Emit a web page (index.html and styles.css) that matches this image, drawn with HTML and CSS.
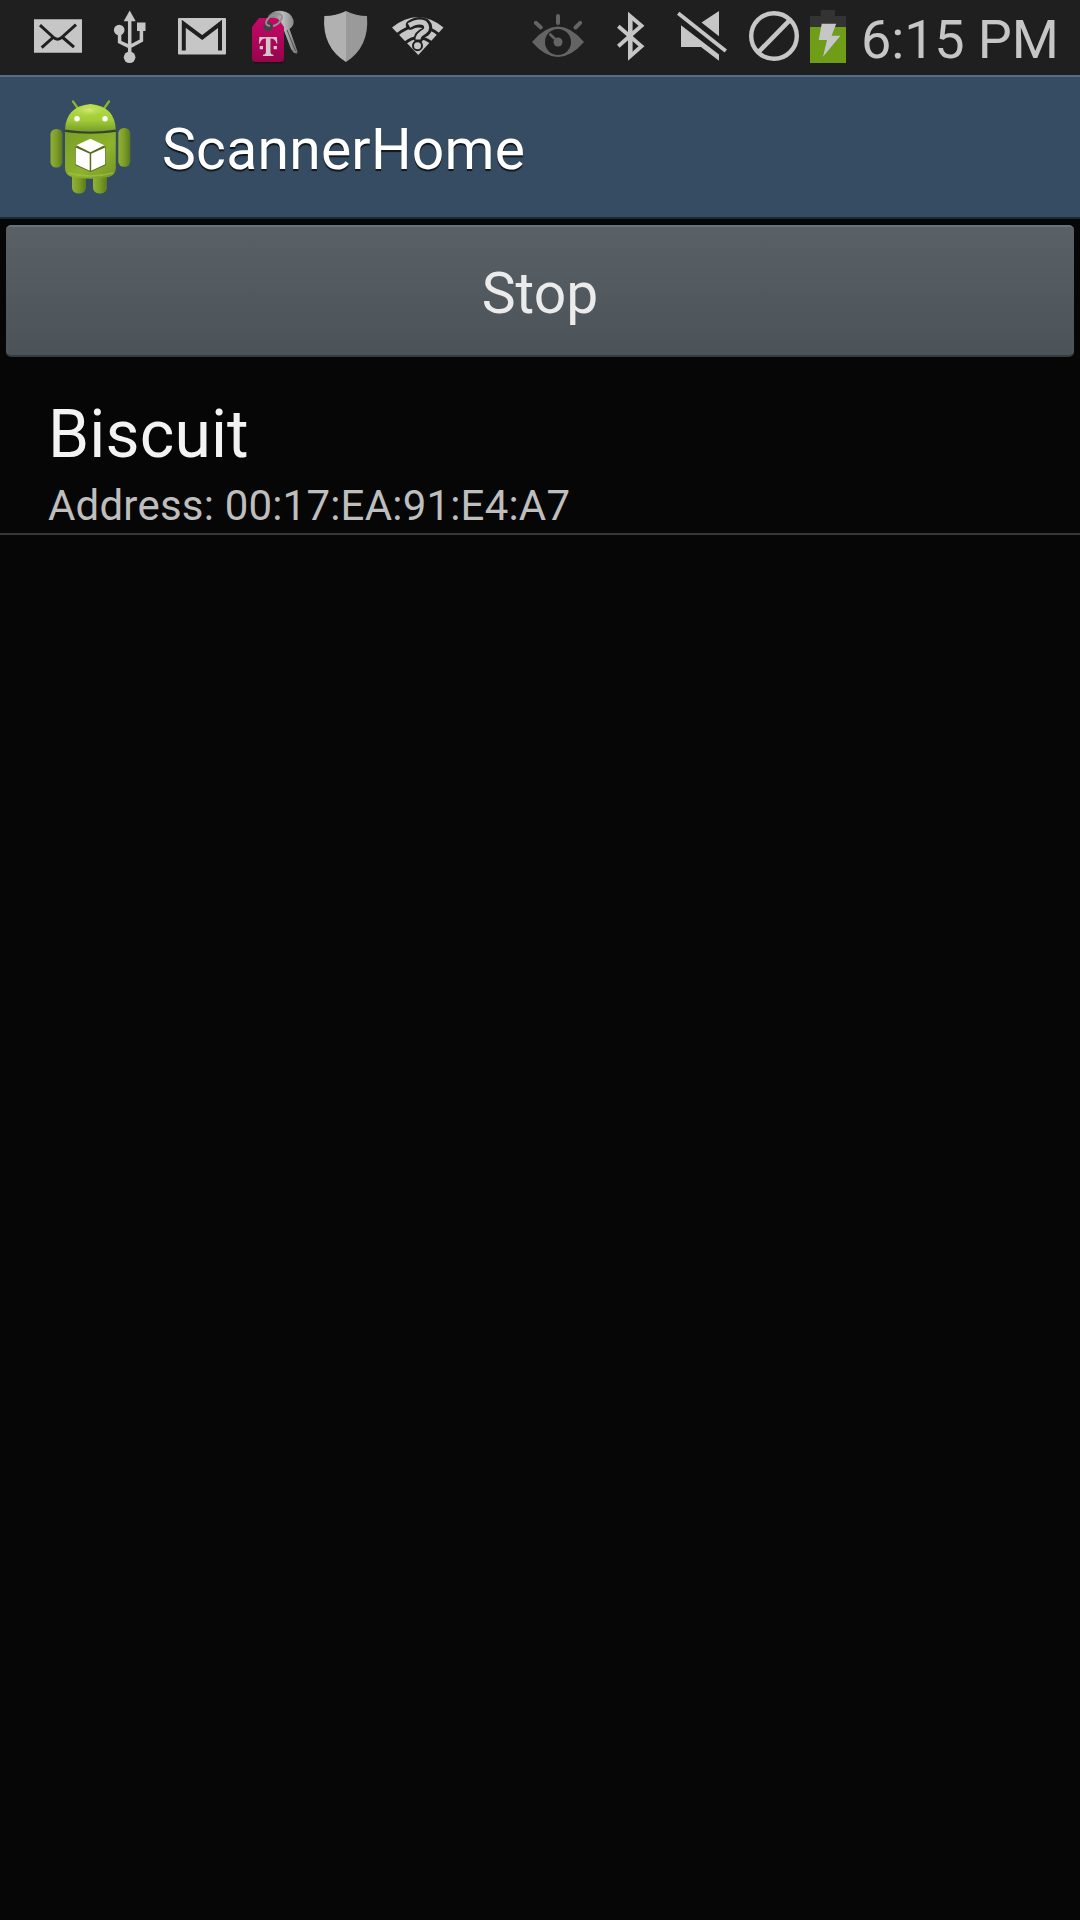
FILE: index.html
```html
<!DOCTYPE html>
<html lang="en">
<head>
<meta charset="utf-8">
<title>ScannerHome</title>
<link rel="stylesheet" href="styles.css">
</head>
<body>
<div class="status-bar">
  <div class="notifications">
    <svg class="slot" viewBox="22 0 72 75"><path class="light" d="M34 19.300h48v33.400H34z"/><path class="cut" stroke-width="3" d="M40 25.200L53 37q4.600 4.500 9.200 0L76 24.700M41.700 47.700L53 37.500M74 47.200L62.200 37"/></svg>
    <svg class="slot" viewBox="94 0 72 75"><path class="light" d="M129.700 10.500l6 10.700h-12zM137 22.500h8.500V31H137z"/><circle class="light" cx="119.200" cy="30" r="5.300"/><circle class="light" cx="129.600" cy="57.300" r="5.800"/><path class="line" stroke-width="3.500" d="M129.700 20v34M119.600 32v10l10 4.700 11.800-6.200V28"/></svg>
    <svg class="slot" viewBox="166 0 72 75"><rect class="light" x="178" y="18" width="48" height="36.500" rx="1"/><path class="cut" stroke-width="4" d="M183.800 50.500V23.800L202.200 37.500 220 23.800v26.700"/></svg>
    <svg class="slot" viewBox="238 0 72 75">
      <defs><linearGradient id="pink" x1="0" y1="0" x2="0" y2="1"><stop offset="0" stop-color="#c60868"/><stop offset="1" stop-color="#96044c"/></linearGradient><linearGradient id="steel"><stop offset="0" stop-color="#666"/><stop offset=".5" stop-color="#bdbdbd"/><stop offset="1" stop-color="#777"/></linearGradient></defs>
      <path fill="url(#steel)" d="M268 16q5-6 14-5 9 1 11.500 9 1 6-4 9l8 22.500-.5 2-3-.5-3-4-8-21-8-5z"/>
      <path stroke="#555" stroke-width="1" d="M287 30l8.500 21"/>
      <path fill="#161616" d="M254 62h29v1.500h-29z"/>
      <path fill="url(#pink)" d="M259 18h16q3 0 5 3l4 6v31q0 4-4 4h-24q-4 0-4-4V27z"/>
      <circle cx="268" cy="26.500" r="4.700" fill="#454045"/>
      <path fill="none" stroke="#929292" stroke-width="2" d="M270 26q-6-1-3-6 4-6 12-6 5 1 2 6-3 5-8 6"/>
      <path fill="#d2c6ca" d="M259.300 37h17.600l.5 6.500h-1q-1-5-5.900-5v13.500q0 2.500 3 2.800V56h-10.600v-1.200q3-.3 3-2.800V38.500q-5 0-6 5h-1zM259.700 46h3.300v3.300h-3.300zM273.600 46h3.300v3.300h-3.300z"/>
    </svg>
    <svg class="slot" viewBox="310 0 72 75"><path fill="#b1b1b1" d="M346 11q-10 5-21.700 5-2.500 31 21.700 46z"/><path fill="#9a9a9a" d="M346 11q10 5 21 5 2.500 31-21 46z"/></svg>
    <svg class="slot" viewBox="382 0 72 75">
      <path class="light" d="M392 27.500q26-21 51.500 0L418.300 55z"/>
      <path class="cut" stroke-width="3" d="M396 35.500q22-19 44 0M404 44q14-13 29 0"/>
      <path class="cut" stroke-width="9.500" stroke-linecap="round" stroke-linejoin="round" d="M410.500 25q8-5 14.500-2 5 4.500 0 9-6.500 3-6.500 6.500"/>
      <path class="line" stroke-width="5" d="M409 25.500q9-5.500 15.500-2.500 4.500 4.500 0 8.500-6.500 3.500-6.500 8"/>
      <circle cx="417.500" cy="45.700" r="4.500" fill="#c6c6c6" stroke="#1f1f1f" stroke-width="2"/>
    </svg>
  </div>
  <div class="system">
    <svg class="slot" viewBox="522 0 72 75"><path fill="#646464" d="M532 42q26-31 52 0-26 30-52 0z"/><circle cx="558" cy="42" r="13" fill="#1f1f1f"/><circle cx="558" cy="42" r="4.500" fill="#646464"/><path fill="none" stroke="#646464" stroke-width="2.600" d="M549.500 33.800l5.500 5.200"/><path fill="none" stroke="#646464" stroke-width="4" stroke-linecap="round" d="M558 16v7M535.800 22.800l5 4.700M580.200 22.800l-4.700 4.700"/></svg>
    <svg class="slot" viewBox="594 0 72 75"><path class="line" stroke-width="3.900" d="M618.300 26.300L641.500 46.200 630 56.500V16l11.500 9.800-23.200 20.500"/><path class="light" d="M628 12.500l4.600 4v39.200l-4.600 4z"/></svg>
    <svg class="slot" viewBox="666 0 72 75"><path class="line" stroke-width="3.800" d="M678.200 13.300L725.800 51"/><path class="light" d="M701.500 22.500L719 11v25.200zM681 25.200l38 29.300v6.300L701 47h-20z"/></svg>
    <svg class="slot" viewBox="738 0 72 75"><circle class="line" cx="774" cy="36" r="22.800" stroke-width="4.400"/><path class="line" stroke-width="4.600" d="M758.500 52L790 19.800"/></svg>
    <svg class="battery" viewBox="810 0 36 75"><path fill="#333" d="M810 16h10.700v-6H835v6h11v11h-36z"/><path fill="#6f9d18" d="M810 27h36v36h-36z"/><path class="light" d="M821.700 23.700h14.500l-4.600 12h8.800l-17.400 21L827 40h-8.300z"/></svg>
    <span class="clock">6:15 PM</span>
  </div>
</div>
<header class="action-bar">
  <svg class="app-icon" viewBox="46 96 90 102">
    <defs>
      <linearGradient id="head" x1="0" y1="0" x2="0" y2="1"><stop offset="0" stop-color="#b8e04b"/><stop offset=".6" stop-color="#a1ca38"/><stop offset="1" stop-color="#779d27"/></linearGradient>
      <linearGradient id="body" x1="0" y1="0" x2="1" y2="1"><stop offset="0" stop-color="#7b9e29"/><stop offset=".6" stop-color="#8db22c"/><stop offset="1" stop-color="#749426"/></linearGradient>
      <linearGradient id="limb"><stop offset="0" stop-color="#8fb232"/><stop offset=".5" stop-color="#7c9d29"/><stop offset="1" stop-color="#5c791d"/></linearGradient>
      <radialGradient id="shine"><stop offset="0" stop-color="#d9e67e"/><stop offset="1" stop-color="#b8e04b" stop-opacity="0"/></radialGradient>
    </defs>
    <path stroke="#8ab52f" stroke-width="2.200" stroke-linecap="round" d="M73 101.500l5 7M109 101.500l-5 7"/>
    <rect fill="url(#limb)" x="72" y="170" width="14" height="23.500" rx="6"/><rect fill="url(#limb)" x="93" y="170" width="14" height="23.500" rx="6"/>
    <rect fill="url(#limb)" x="50.500" y="129" width="12" height="38.500" rx="5.500"/><rect fill="url(#limb)" x="118.300" y="128" width="12" height="38.800" rx="5.500"/>
    <path fill="url(#body)" d="M65 132q25 2 50.800 0v36q0 7-7 9-18 3.500-36.800 0-7-2-7-9z"/>
    <path fill="none" stroke="#a4c64f" stroke-opacity=".6" stroke-width="1.500" d="M68 173q22 6 45 0"/>
    <path fill="url(#head)" d="M65 129.500q1-23 25.500-25.500 24.500 2.500 25.300 25.500-25 4-50.800 0z"/>
    <ellipse fill="url(#shine)" cx="89" cy="110" rx="14" ry="6"/>
    <path fill="none" stroke="#344713" stroke-width="1.500" d="M65 131q25 4 50.800 0"/>
    <circle cx="77" cy="118.700" r="2.700" fill="#fff"/><circle cx="105" cy="118.700" r="2.700" fill="#fff"/>
    <path fill="#536d1b" d="M75 147l15.500-7 15.500 7v18l-15.500 7-15.500-7z"/>
    <path fill="#fff" d="M90.400 138.700l14 6.600-14 7-14-7zM75.700 147.500l14 6.300v16.900l-14-6.500zM105.200 147.500l-14 6.300v16.900l14-6.500z"/>
  </svg>
  <h1 class="title">ScannerHome</h1>
</header>
<main class="content">
  <button class="stop" type="button">Stop</button>
  <ul class="devices">
    <li class="device"><span class="name">Biscuit</span><span class="address">Address: 00:17:EA:91:E4:A7</span></li>
  </ul>
</main>
</body>
</html>
```
FILE: styles.css
```css
* { box-sizing: border-box; }
body {
  margin: 0;
  min-height: 1920px;
  background: #060606;
  font-family: Roboto, "Liberation Sans", sans-serif;
}
.status-bar {
  display: flex;
  justify-content: space-between;
  height: 75px;
  padding: 0 23px 0 22px;
  background: #1f1f1f;
}
.notifications, .system { display: flex; }
.slot { width: 72px; height: 75px; }
.battery { width: 36px; height: 75px; }
.light { fill: #c6c6c6; }
.line { fill: none; stroke: #c6c6c6; }
.cut { fill: none; stroke: #1f1f1f; }
.clock {
  width: 211px;
  padding-left: 15px;
  color: #c6c6c6;
  font-size: 54px;
  line-height: 79px;
  letter-spacing: -0.15px;
  white-space: nowrap;
}
.action-bar {
  display: flex;
  align-items: center;
  gap: 26px;
  height: 144px;
  padding-left: 46px;
  background: #354c62;
  border-top: 2px solid #527087;
  border-bottom: 2px solid #172b3b;
}
.app-icon { width: 90px; height: 102px; }
.title {
  margin: 0;
  padding-top: 6px;
  color: #fff;
  font-size: 57px;
  font-weight: 400;
  line-height: 72px;
  letter-spacing: 0.25px;
  text-shadow: 0 2px 1px #10161c;
}
.content { padding-top: 6px; }
.stop {
  display: block;
  width: 1068px;
  height: 132px;
  margin: 0 auto;
  padding: 5px 0 0;
  border: 0 solid #343c40;
  border-top: 2px solid #6a737a;
  border-bottom-width: 2px;
  border-radius: 5px;
  background: linear-gradient(#596066, #4b5358);
  color: #ebebeb;
  font: 400 57px Roboto, "Liberation Sans", sans-serif;
}
.devices { margin: 0; padding: 0; list-style: none; }
.device {
  display: flex;
  flex-direction: column;
  height: 178px;
  padding: 39px 48px 0;
  border-bottom: 2px solid #373737;
}
.name { color: #f3f3f3; font-size: 66px; line-height: 78px; letter-spacing: 0.15px; }
.address { color: #bebebe; font-size: 42px; line-height: 50px; margin-top: 7px; letter-spacing: 0.2px; }
```
